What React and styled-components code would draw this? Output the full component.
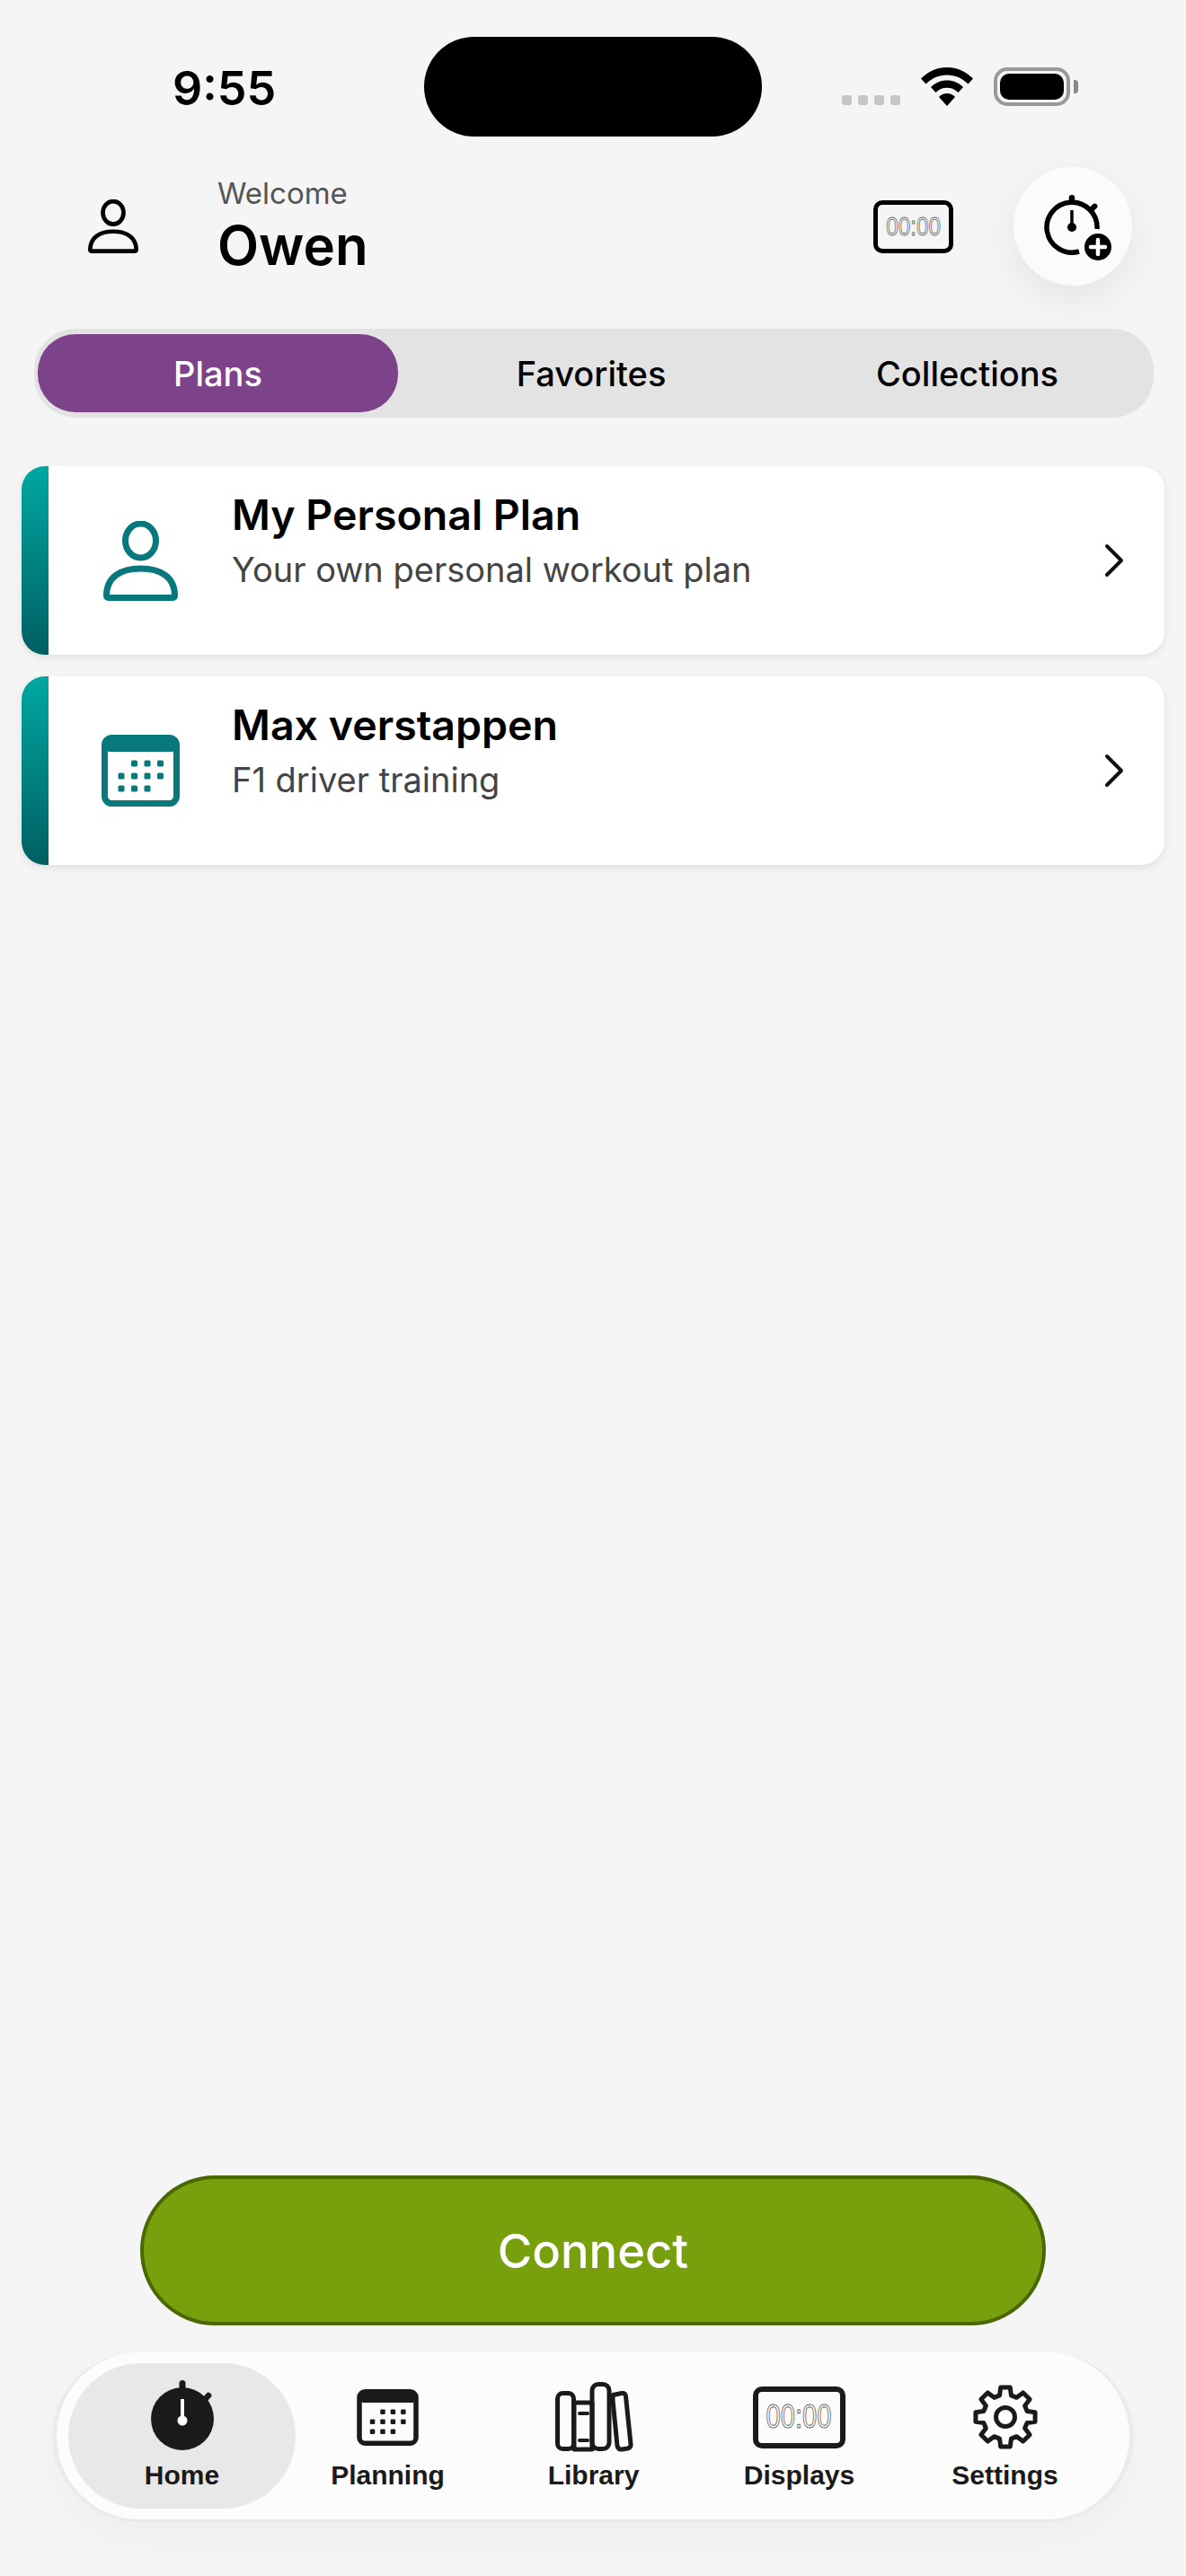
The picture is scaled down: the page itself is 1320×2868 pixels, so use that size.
import React from "react";
import styled, { createGlobalStyle } from "styled-components";

const GlobalStyle = createGlobalStyle`
  html, body { margin: 0; padding: 0; background: #f5f5f5; }
  * { box-sizing: border-box; }
`;

const Screen = styled.div`
  width: 1320px;
  height: 2868px;
  background: #f5f5f5;
  display: flex;
  flex-direction: column;
  font-family: Inter, "Liberation Sans", sans-serif;
  color: #000;
  overflow: hidden;
`;

const StatusBar = styled.div`
  height: 152px;
  padding-top: 41px;
  display: grid;
  grid-template-columns: 472px 376px 1fr;
`;

const Clock = styled.div`
  font-size: 52px;
  font-weight: 600;
  line-height: 111px;
  margin-top: 2px;
  padding-left: 192px;
`;

const Island = styled.div`
  height: 111px;
  background: #000;
  border-radius: 56px;
`;

const StatusIcons = styled.div`
  height: 78px;
  margin-top: 34px;
  padding-left: 89px;
  display: flex;
  align-items: flex-start;
`;

const SignalDots = styled.div`
  display: flex;
  gap: 7px;
  margin-top: 31px;
  margin-right: 23px;
`;

const SignalDot = styled.span`
  width: 11px;
  height: 11px;
  border-radius: 3px;
  background: #c6c6c6;
`;

const Battery = styled.div`
  width: 85px;
  height: 43px;
  margin-left: 23px;
  padding: 3px;
  border: 4px solid #999;
  border-radius: 15px;
  position: relative;
  &::after {
    content: "";
    position: absolute;
    right: -13px;
    top: 10px;
    width: 5px;
    height: 15px;
    background: #888;
    border-radius: 0 4px 4px 0;
  }
`;

const BatteryFill = styled.div`
  height: 100%;
  background: #000;
  border-radius: 10px;
`;

const Header = styled.header`
  margin-top: 34px;
  height: 132px;
  padding: 0 60px 0 98px;
  display: flex;
  align-items: center;
`;

const Greeting = styled.div`
  margin-left: 88px;
  flex: 1;
  display: flex;
  flex-direction: column;
`;

const Welcome = styled.div`
  font-size: 33px;
  line-height: 42px;
  margin-top: -4px;
  color: #555;
`;

const Owner = styled.div`
  font-size: 60px;
  line-height: 68px;
  font-weight: 600;
  margin-top: 3px;
`;

const RoundButton = styled.button`
  width: 132px;
  height: 132px;
  margin-left: 67px;
  padding: 4px 0 0;
  border: 0;
  border-radius: 50%;
  background: #fbfbfb;
  box-shadow: 0 14px 44px rgba(0, 0, 0, 0.07);
  display: flex;
  align-items: center;
  justify-content: center;
`;

const Segments = styled.div`
  margin: 48px 36px 0 38px;
  height: 99px;
  padding: 6px 4px;
  background: #e3e3e3;
  border-radius: 46px;
  display: grid;
  grid-template-columns: 401px 430px 1fr;
`;

const Segment = styled.div`
  display: flex;
  align-items: center;
  justify-content: center;
  font-size: 38px;
  font-weight: 500;
  border-radius: 42px;
  color: ${(p) => (p.$active ? "#fff" : "#000")};
  background: ${(p) => (p.$active ? "#7c438b" : "transparent")};
`;

const PlanList = styled.div`
  margin: 54px 24px 0;
  display: flex;
  flex-direction: column;
  gap: 24px;
`;

const PlanCard = styled.div`
  height: 210px;
  display: flex;
  align-items: stretch;
  background: #fff;
  border-radius: 26px;
  box-shadow: 0 3px 8px rgba(0, 0, 0, 0.09);
  overflow: hidden;
`;

const Accent = styled.div`
  width: 30px;
  background: linear-gradient(180deg, #00a8a2 0%, #005f63 100%);
`;

const PlanIcon = styled.div`
  width: 204px;
  display: flex;
  align-items: center;
  justify-content: center;
`;

const PlanText = styled.div`
  flex: 1;
  padding-top: 26px;
`;

const PlanTitle = styled.div`
  font-size: 46.5px;
  line-height: 56px;
  font-weight: 600;
`;

const PlanSubtitle = styled.div`
  font-size: 38px;
  line-height: 46px;
  margin-top: 10px;
  color: #444;
`;

const Chevron = styled.div`
  width: 67px;
  display: flex;
  align-items: center;
`;

const Spacer = styled.div`
  flex: 1;
`;

const ConnectButton = styled.button`
  align-self: center;
  width: 1008px;
  height: 167px;
  border: 4px solid #4a6800;
  border-radius: 84px;
  background: #78a00c;
  color: #fff;
  font-family: inherit;
  font-size: 52.5px;
  font-weight: 500;
`;

const TabBar = styled.nav`
  margin: 30px 63px 63px 63px;
  width: 1194px;
  height: 186px;
  padding: 12px 24px 12px 25px;
  background: #fcfcfc;
  border-radius: 93px;
  box-shadow: -5px 1px 0 0 #ebebeb, 5px 1px 0 0 #ebebeb, 0 3px 0 0 #e8e8e8,
    0 20px 50px rgba(0, 0, 0, 0.03);
  display: grid;
  grid-template-columns: repeat(5, 229px);
`;

const TabItem = styled.div`
  margin: 0 ${(p) => (p.$active ? "-12px" : "0")};
  border-radius: 81px;
  background: ${(p) => (p.$active ? "#e8e8e8" : "transparent")};
  display: flex;
  flex-direction: column;
  align-items: center;
`;

const TabIconSlot = styled.div`
  height: 92px;
  margin-top: 14px;
  display: flex;
  align-items: center;
  justify-content: center;
`;

const TabLabel = styled.div`
  font-family: "Liberation Sans", Arial, sans-serif;
  font-size: 30px;
  line-height: 36px;
  font-weight: 700;
  color: #1a1a1a;
  margin-top: 1px;
`;

// Timer display: a rounded frame around hollow digits.
const DisplayFrame = styled.div`
  width: ${(p) => p.$width}px;
  height: ${(p) => p.$height}px;
  border: ${(p) => p.$border}px solid ${(p) => p.$color};
  border-radius: 10px;
  display: flex;
  align-items: center;
  justify-content: center;
`;

const DisplayDigits = styled.span`
  font-family: "Liberation Sans", sans-serif;
  font-size: ${(p) => p.$size}px;
  line-height: 1;
  color: transparent;
  -webkit-text-stroke: ${(p) => p.$stroke}px #666;
  transform: scaleX(0.81);
`;

const PersonIcon = ({ size, color, stroke }) => (
  <svg width={size} height={(size * 89) / 83} viewBox="0 0 83 89">
    <ellipse cx="41.5" cy="22" rx="17" ry="19" fill="none" stroke={color} strokeWidth={stroke} />
    <path
      d="M3.5 83 C3.5 62 20 53 41.5 53 C63 53 79.5 62 79.5 83 Q79.5 85.5 76 85.5 L7 85.5 Q3.5 85.5 3.5 83 Z"
      fill="none"
      stroke={color}
      strokeWidth={stroke}
      strokeLinejoin="round"
    />
  </svg>
);

const CalendarIcon = ({ width, height, color }) => {
  const rows = [
    [1, 2, 3],
    [0, 1, 2, 3],
    [0, 1, 2],
  ];
  return (
    <svg width={width} height={height} viewBox="0 0 87 80">
      <rect x="3.500" y="3.500" width="80" height="73" rx="8" fill="none" stroke={color} strokeWidth="7" />
      <rect x="3" y="3" width="81" height="16" rx="6" fill={color} />
      {rows.map((row, r) =>
        row.map((c) => (
          <rect key={`${r}-${c}`} x={18.5 + c * 14.5} y={28.5 + r * 14} width="7" height="7" rx="1.5" fill={color} />
        ))
      )}
    </svg>
  );
};

const DigitalDisplay = ({ width, height, border, color, size, stroke }) => (
  <DisplayFrame $width={width} $height={height} $border={border} $color={color}>
    <DisplayDigits $size={size} $stroke={stroke}>00:00</DisplayDigits>
  </DisplayFrame>
);

const StopwatchSolid = () => (
  <svg width="70" height="82" viewBox="0 0 70 82">
    <rect x="31.500" y="0" width="7" height="14" rx="3.500" fill="#1a1a1a" />
    <rect x="59" y="13" width="6.500" height="13" rx="3" fill="#1a1a1a" transform="rotate(42 62 19)" />
    <circle cx="35" cy="43" r="35" fill="#1a1a1a" />
    <rect x="33" y="21" width="4" height="24" fill="#fff" />
    <circle cx="35" cy="45" r="5.500" fill="#fff" />
  </svg>
);

const StopwatchAdd = () => (
  <svg width="88" height="74" viewBox="0 0 88 74">
    <rect x="39.700" y="0" width="6.500" height="10" rx="3" fill="#000" />
    <rect x="64" y="9" width="6" height="10" rx="3" fill="#000" transform="rotate(45 67 14)" />
    <path d="M71 38 A28 28 0 1 0 51 63" fill="none" stroke="#000" strokeWidth="5.500" />
    <rect x="41.200" y="17" width="3.500" height="19" fill="#000" />
    <circle cx="43" cy="36" r="5" fill="#000" />
    <circle cx="72" cy="58" r="15" fill="#000" />
    <path d="M64 58 H80 M72 50 V66" stroke="#fff" strokeWidth="4.500" strokeLinecap="round" />
  </svg>
);

const LibraryIcon = () => (
  <svg width="88" height="78" viewBox="0 0 88 78">
    <g fill="none" stroke="#1a1a1a" strokeWidth="5" strokeLinejoin="round">
      <rect x="3.500" y="12.500" width="18" height="62" rx="6" />
      <path d="M22 23 H42 V75 H22 Z" />
      <rect x="42" y="2.500" width="19" height="72" rx="7" />
      <path d="M65 14.500 L75 12.500 Q79 12 79.500 16 L85 69 Q85.500 73 81.500 74 L75 75 Q71 75.500 70 71 L65 20 Z" />
    </g>
    <path d="M28 35 H37 M28 65 H37" stroke="#1a1a1a" strokeWidth="4" strokeLinecap="round" />
  </svg>
);

// Eight-tooth cog outline, built from alternating tip and valley radii.
const gearPath = (() => {
  const cx = 37;
  const cy = 37;
  const pts = [];
  for (let i = 0; i < 8; i += 1) {
    const a = -Math.PI / 2 + (i * Math.PI) / 4;
    const rad = (d) => (d * Math.PI) / 180;
    [
      [25, -15],
      [33.5, -9],
      [33.5, 9],
      [25, 15],
    ].forEach(([r, d]) => {
      pts.push(`${(cx + r * Math.cos(a + rad(d))).toFixed(2)} ${(cy + r * Math.sin(a + rad(d))).toFixed(2)}`);
    });
  }
  return `M${pts.join(" L")} Z`;
})();

const GearIcon = () => (
  <svg width="74" height="74" viewBox="0 0 74 74">
    <path d={gearPath} fill="none" stroke="#1a1a1a" strokeWidth="5" strokeLinejoin="round" />
    <circle cx="37" cy="37" r="10.500" fill="none" stroke="#1a1a1a" strokeWidth="5" />
  </svg>
);

const WifiIcon = () => (
  <svg width="58" height="43" viewBox="0 0 58 43">
    <path d="M29 0 C40 0 50 4.500 58 12.500 L52.500 18.500 C46 12 38 8.500 29 8.500 C20 8.500 12 12 5.500 18.500 L0 12.500 C8 4.500 18 0 29 0 Z" fill="#000" />
    <path d="M29 14.500 C36 14.500 42 17 47 22 L41.500 28 C38 24.500 34 22.800 29 22.800 C24 22.800 20 24.500 16.500 28 L11 22 C16 17 22 14.500 29 14.500 Z" fill="#000" />
    <path d="M29 29 C32.500 29 35.500 30.300 38 33 L29 43 L20 33 C22.500 30.300 25.500 29 29 29 Z" fill="#000" />
  </svg>
);

const ChevronIcon = () => (
  <svg width="22" height="38" viewBox="0 0 22 38">
    <path d="M3 3 L19 19 L3 35" fill="none" stroke="#111" strokeWidth="4" strokeLinecap="round" strokeLinejoin="round" />
  </svg>
);

const TEAL = "#07797d";
const DARK = "#1a1a1a";

export default function App() {
  return (
    <Screen>
      <GlobalStyle />
      <StatusBar>
        <Clock>9:55</Clock>
        <Island />
        <StatusIcons>
          <SignalDots>
            <SignalDot />
            <SignalDot />
            <SignalDot />
            <SignalDot />
          </SignalDots>
          <WifiIcon />
          <Battery>
            <BatteryFill />
          </Battery>
        </StatusIcons>
      </StatusBar>

      <Header>
        <PersonIcon size={56} color="#000" stroke={7} />
        <Greeting>
          <Welcome>Welcome</Welcome>
          <Owner>Owen</Owner>
        </Greeting>
        <DigitalDisplay width={89} height={59} border={5} color="#000" size={30} stroke={0.9} />
        <RoundButton>
          <StopwatchAdd />
        </RoundButton>
      </Header>

      <Segments>
        <Segment $active>Plans</Segment>
        <Segment>Favorites</Segment>
        <Segment>Collections</Segment>
      </Segments>

      <PlanList>
        <PlanCard>
          <Accent />
          <PlanIcon>
            <PersonIcon size={83} color={TEAL} stroke={7} />
          </PlanIcon>
          <PlanText>
            <PlanTitle>My Personal Plan</PlanTitle>
            <PlanSubtitle>Your own personal workout plan</PlanSubtitle>
          </PlanText>
          <Chevron>
            <ChevronIcon />
          </Chevron>
        </PlanCard>
        <PlanCard>
          <Accent />
          <PlanIcon>
            <CalendarIcon width={87} height={80} color={TEAL} />
          </PlanIcon>
          <PlanText>
            <PlanTitle>Max verstappen</PlanTitle>
            <PlanSubtitle>F1 driver training</PlanSubtitle>
          </PlanText>
          <Chevron>
            <ChevronIcon />
          </Chevron>
        </PlanCard>
      </PlanList>

      <Spacer />

      <ConnectButton>Connect</ConnectButton>

      <TabBar>
        <TabItem $active>
          <TabIconSlot>
            <StopwatchSolid />
          </TabIconSlot>
          <TabLabel>Home</TabLabel>
        </TabItem>
        <TabItem>
          <TabIconSlot>
            <CalendarIcon width={69} height={63} color={DARK} />
          </TabIconSlot>
          <TabLabel>Planning</TabLabel>
        </TabItem>
        <TabItem>
          <TabIconSlot>
            <LibraryIcon />
          </TabIconSlot>
          <TabLabel>Library</TabLabel>
        </TabItem>
        <TabItem>
          <TabIconSlot>
            <DigitalDisplay width={103} height={69} border={6} color={DARK} size={36} stroke={1} />
          </TabIconSlot>
          <TabLabel>Displays</TabLabel>
        </TabItem>
        <TabItem>
          <TabIconSlot>
            <GearIcon />
          </TabIconSlot>
          <TabLabel>Settings</TabLabel>
        </TabItem>
      </TabBar>
    </Screen>
  );
}
